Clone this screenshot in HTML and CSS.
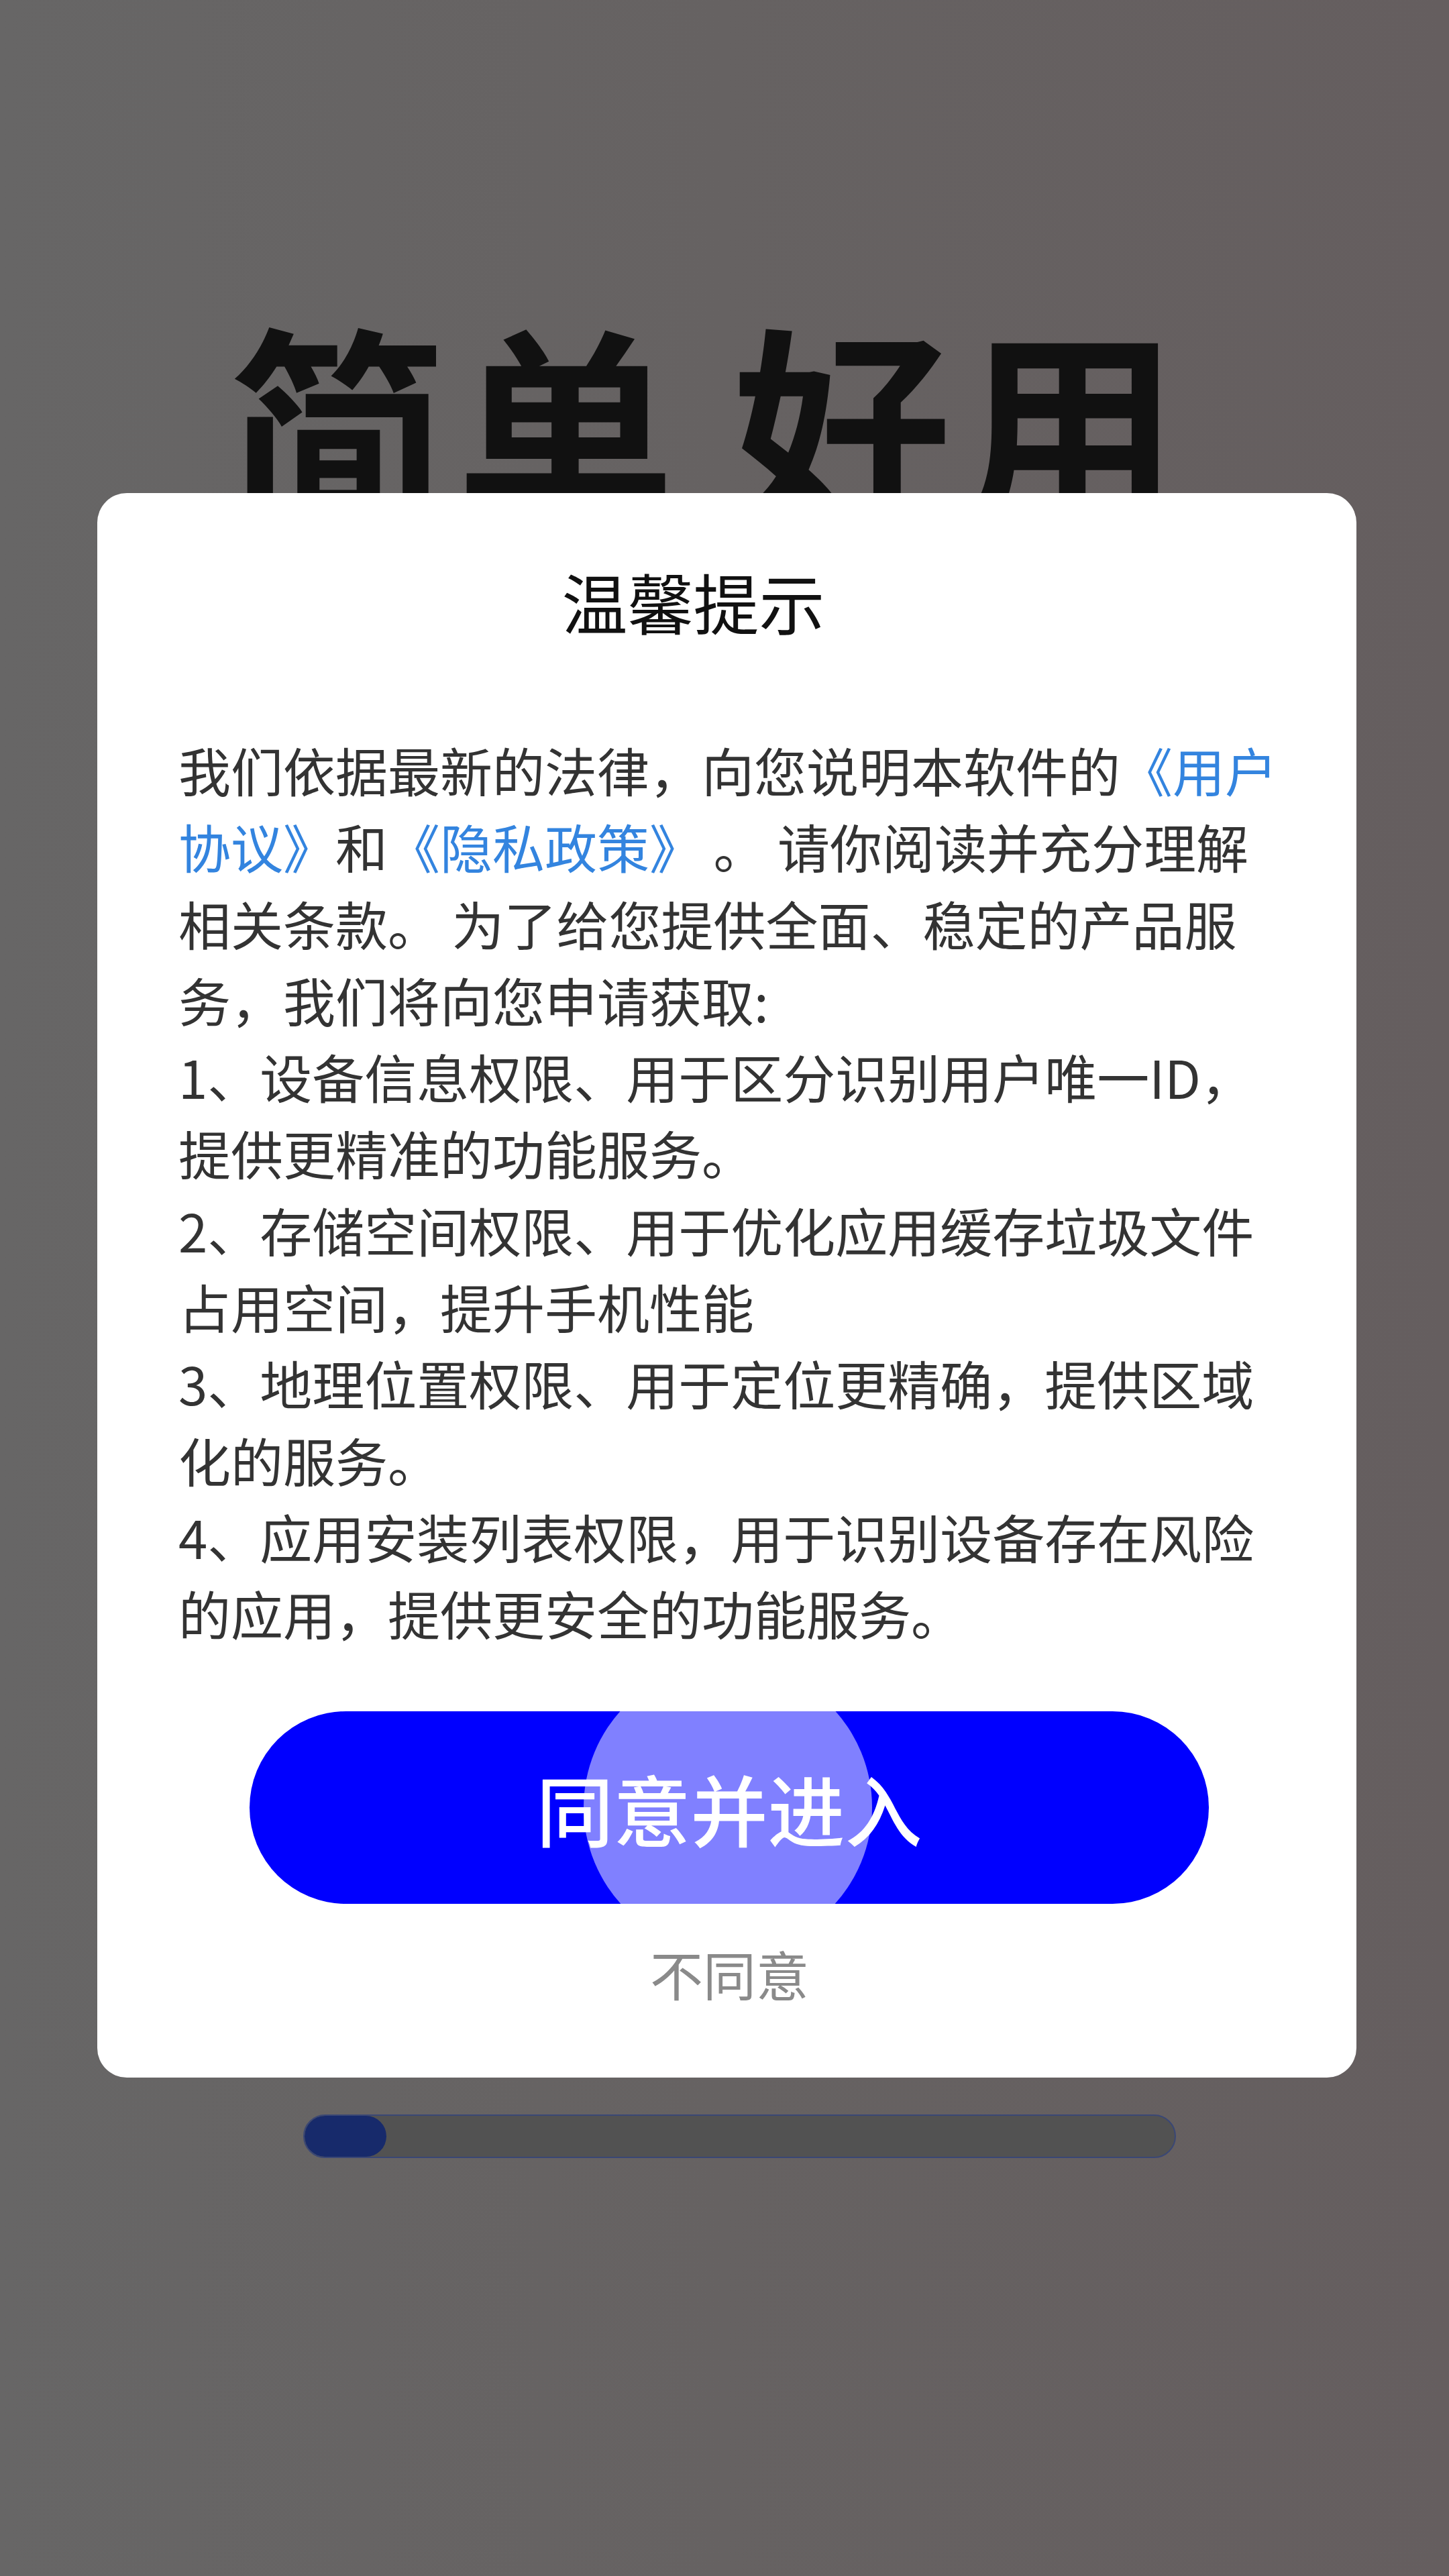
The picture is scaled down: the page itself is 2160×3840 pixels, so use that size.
FILE: index.html
```html
<!DOCTYPE html>
<html lang="zh-CN">
<head>
<meta charset="utf-8">
<title>温馨提示</title>
<link rel="stylesheet" href="styles.css">
</head>
<body>
<div class="screen">
  <div class="hero">简单 好用</div>
  <div class="progress"><div class="progress-fill"></div></div>

  <div class="dialog">
    <div class="dialog-title">温馨提示</div>
    <div class="dialog-body">
      <div class="line">我们依据最新的法律，向您说明本软件的<span class="link">《用户</span></div>
      <div class="line"><span class="link">协议》</span>和<span class="link">《隐私政策》</span> 。 请你阅读并充分理解</div>
      <div class="line">相关条款。 为了给您提供全面、稳定的产品服</div>
      <div class="line">务，我们将向您申请获取:</div>
      <div class="line">1、设备信息权限、用于区分识别用户唯一ID，</div>
      <div class="line">提供更精准的功能服务。</div>
      <div class="line">2、存储空间权限、用于优化应用缓存垃圾文件</div>
      <div class="line">占用空间，提升手机性能</div>
      <div class="line">3、地理位置权限、用于定位更精确，提供区域</div>
      <div class="line">化的服务。</div>
      <div class="line">4、应用安装列表权限，用于识别设备存在风险</div>
      <div class="line">的应用，提供更安全的功能服务。</div>
    </div>
    <div class="agree-btn">
      <span class="ripple"></span>
      <span class="agree-text">同意并进入</span>
    </div>
    <div class="disagree">不同意</div>
  </div>
</div>
</body>
</html>
```

FILE: styles.css
```css
html, body {
  margin: 0;
  padding: 0;
}

body {
  width: 2160px;
  height: 3840px;
  overflow: hidden;
  font-family: "Noto Sans CJK SC", "Noto Sans", sans-serif;
}

.screen {
  position: relative;
  width: 2160px;
  height: 3840px;
  background: linear-gradient(90deg, #676666 0%, #666262 50%, #655e5f 100%);
  display: flex;
  flex-direction: column;
  align-items: flex-start;
}

.hero {
  margin-top: 462px;
  padding-left: 340px;
  font-size: 326px;
  line-height: 326px;
  font-weight: 700;
  color: #111111;
  letter-spacing: 14px;
  word-spacing: -16px;
  white-space: nowrap;
}

.progress {
  margin-top: 2364px;
  margin-left: 452px;
  width: 1301px;
  height: 65px;
  box-sizing: border-box;
  border: 2px solid #3a4775;
  border-radius: 33px;
  background: #525252;
  overflow: hidden;
}

.progress-fill {
  width: 122px;
  height: 100%;
  background: #172a6b;
  border-radius: 33px;
}

/* modal overlay */
.dialog {
  position: absolute;
  left: 145px;
  top: 735px;
  width: 1877px;
  height: 2362px;
  box-sizing: border-box;
  background: #ffffff;
  border-radius: 44px;
  display: flex;
  flex-direction: column;
}

.dialog-title {
  margin-top: 90px;
  padding-right: 100px;
  text-align: center;
  font-size: 98px;
  line-height: 140px;
  color: #111111;
}

.dialog-body {
  margin-top: 125px;
  padding-left: 121px;
  font-size: 78px;
  line-height: 114.3px;
  color: #333333;
}

.line {
  white-space: nowrap;
}

.link {
  color: #3384df;
}

.agree-btn {
  position: relative;
  margin-top: 89px;
  margin-left: 227px;
  width: 1430px;
  height: 287px;
  border-radius: 144px;
  background: #0000ff;
  overflow: hidden;
  display: flex;
  align-items: center;
  justify-content: center;
}

.ripple {
  position: absolute;
  left: 498px;
  top: -72px;
  width: 430px;
  height: 430px;
  border-radius: 50%;
  background: rgba(255, 255, 255, 0.5);
}

.agree-text {
  position: relative;
  font-size: 115px;
  line-height: 140px;
  font-weight: 500;
  color: #ffffff;
}

.disagree {
  margin-top: 49px;
  text-align: center;
  padding-left: 8px;
  font-size: 79px;
  line-height: 110px;
  color: #8a8a8a;
}
```
